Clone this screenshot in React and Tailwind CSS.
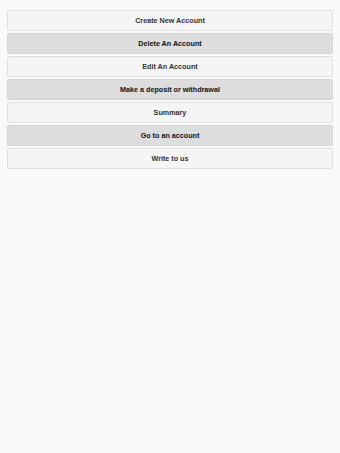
const ITEMS = [
  { label: 'Create New Account', dark: false },
  { label: 'Delete An Account', dark: true },
  { label: 'Edit An Account', dark: false },
  { label: 'Make a deposit or withdrawal', dark: true },
  { label: 'Summary', dark: false },
  { label: 'Go to an account', dark: true },
  { label: 'Write to us', dark: false },
];

export default function App() {
  return (
    <div className="min-h-screen bg-[#f9f9f9] px-[7px] pt-[10px] font-['Liberation_Sans',Arial,sans-serif]">
      <div className="flex flex-col gap-[2px]">
        {ITEMS.map(({ label, dark }) => (
          <button
            key={label}
            className={`h-[21px] w-full rounded-[2px] border pt-[2px] text-[7.2px] font-bold ${dark ? 'bg-[#dddddd] border-[#d6d6d6] text-[#111]' : 'bg-[#f5f5f5] border-[#e0e0e0] text-[#333]'}`}
          >
            {label}
          </button>
        ))}
      </div>
    </div>
  );
}
